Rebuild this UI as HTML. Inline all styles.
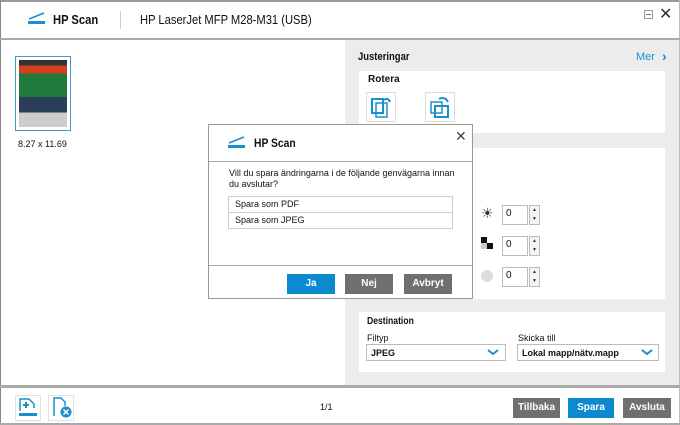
<!DOCTYPE html>
<html><head><meta charset="utf-8"><style>
*{box-sizing:border-box;margin:0;padding:0}
body{width:680px;height:425px;overflow:hidden;background:#fff;font-family:"Liberation Sans",sans-serif;position:relative;color:#111}
.a{position:absolute}
.b{font-weight:bold}
.n{transform:scaleX(0.86);transform-origin:left top;white-space:nowrap}
.btn{position:absolute;height:20px;color:#fff;font-weight:bold;font-size:10px;text-align:center;line-height:20px}
.g{background:#707070}.bl{background:#0c8ad0}
.sp{position:absolute;width:11px;height:20px;border:1px solid #bbb;background:#f4f4f4;font-size:5px;line-height:9px;text-align:center;color:#333}
.in{position:absolute;width:26px;height:20px;border:1px solid #bbb;background:#fff;font-size:10px;padding:2px 3px}
</style></head><body>
<div class="a" style="left:0;top:0;width:680px;height:2px;background:#999"></div>
<div class="a" style="left:0;top:0;width:1px;height:425px;background:#888"></div>
<div class="a" style="left:679px;top:0;width:1px;height:425px;background:#bbb"></div>
<svg class="a" style="left:27px;top:11px" width="20" height="14"><path d="M2 8 L17 2" stroke="#1a8fd0" stroke-width="1.5"/><rect x="1" y="10" width="17" height="3" fill="#1a8fd0"/></svg>
<div class="a b n" style="left:53px;top:12px;font-size:13px">HP Scan</div>
<div class="a" style="left:120px;top:11px;width:1px;height:18px;background:#ccc"></div>
<div class="a n" style="left:140px;top:12px;font-size:13px">HP LaserJet MFP M28-M31 (USB)</div>
<div class="a" style="left:644px;top:10px;width:9px;height:9px;border:1px solid #999"></div>
<div class="a" style="left:646px;top:14px;width:5px;height:1px;background:#777"></div>
<div class="a" style="left:659px;top:4px;font-size:16px;color:#333">✕</div>
<div class="a" style="left:0;top:38px;width:680px;height:2px;background:#aaa"></div>
<div class="a" style="left:15px;top:56px;width:56px;height:75px;border:1px solid #3c9ad0;padding:3px">
<div style="width:100%;height:100%;background:linear-gradient(#333 0 8%,#d2401f 8% 20%,#1f7a3e 20% 55%,#2a3e58 55% 78%,#ccc 78% 100%)"></div></div>
<div class="a" style="left:18px;top:139px;font-size:9px">8.27 x 11.69</div>
<div class="a" style="left:345px;top:40px;width:334px;height:346px;background:#ececec"></div>
<div class="a b n" style="left:358px;top:51px;font-size:11px">Justeringar</div>
<div class="a" style="left:636px;top:51px;font-size:11px;color:#1a8fd0">Mer</div>
<div class="a b" style="left:662px;top:48px;font-size:14px;color:#1a8fd0">›</div>
<div class="a" style="left:359px;top:71px;width:306px;height:62px;background:#fff"></div>
<div class="a b" style="left:368px;top:74px;font-size:10px">Rotera</div>
<div class="a" style="left:366px;top:92px;width:30px;height:30px;border:1px solid #ddd"></div>
<div class="a" style="left:425px;top:92px;width:30px;height:30px;border:1px solid #ddd"></div>
<svg class="a" style="left:370px;top:94px" width="24" height="26"><rect x="2" y="5" width="11" height="14" fill="none" stroke="#1a8fd0" stroke-width="2"/><rect x="6" y="9" width="11" height="14" fill="none" stroke="#1a8fd0" stroke-width="1.5"/><path d="M14 6 Q18 3 20 8" fill="none" stroke="#1a8fd0" stroke-width="2"/></svg>
<svg class="a" style="left:429px;top:94px" width="24" height="26"><rect x="2" y="8" width="11" height="11" fill="none" stroke="#1a8fd0" stroke-width="1.5"/><rect x="6" y="12" width="13" height="11" fill="none" stroke="#1a8fd0" stroke-width="2"/><path d="M10 5 Q16 2 19 8" fill="none" stroke="#1a8fd0" stroke-width="2"/></svg>
<div class="a" style="left:359px;top:148px;width:306px;height:151px;background:#fff"></div>
<div class="a" style="left:481px;top:205px;font-size:14px;color:#333">☀</div>
<div class="a" style="left:481px;top:237px;width:6px;height:6px;background:#111"></div><div class="a" style="left:487px;top:243px;width:6px;height:6px;background:#111"></div><div class="a" style="left:481px;top:243px;width:6px;height:6px;background:#ccc"></div>
<div class="a" style="left:481px;top:270px;width:12px;height:12px;border-radius:50%;background:#ddd"></div>
<div class="in" style="left:502px;top:205px">0</div><div class="sp" style="left:529px;top:205px">▲<br>▼</div>
<div class="in" style="left:502px;top:236px">0</div><div class="sp" style="left:529px;top:236px">▲<br>▼</div>
<div class="in" style="left:502px;top:267px">0</div><div class="sp" style="left:529px;top:267px">▲<br>▼</div>
<div class="a" style="left:359px;top:312px;width:306px;height:60px;background:#fff"></div>
<div class="a b n" style="left:367px;top:316px;font-size:10px">Destination</div>
<div class="a" style="left:367px;top:333px;font-size:9px">Filtyp</div>
<div class="a" style="left:518px;top:333px;font-size:9px">Skicka till</div>
<div class="a b" style="left:366px;top:344px;width:140px;height:17px;border:1px solid #bbb;font-size:9px;padding:3px 4px">JPEG</div>
<div class="a b" style="left:517px;top:344px;width:142px;height:17px;border:1px solid #bbb;font-size:9px;padding:3px 4px">Lokal mapp/nätv.mapp</div>
<svg class="a" style="left:486px;top:348px" width="14" height="9"><path d="M2 2 L7 6 L12 2" fill="none" stroke="#1a8fd0" stroke-width="2"/></svg>
<svg class="a" style="left:640px;top:348px" width="14" height="9"><path d="M2 2 L7 6 L12 2" fill="none" stroke="#1a8fd0" stroke-width="2"/></svg>
<div class="a" style="left:0;top:385px;width:680px;height:3px;background:#aaa"></div>
<div class="a" style="left:0;top:423px;width:680px;height:2px;background:#aaa"></div>
<div class="a" style="left:15px;top:395px;width:26px;height:26px;border:1px solid #e0e0e0"></div>
<div class="a" style="left:48px;top:395px;width:26px;height:26px;border:1px solid #e0e0e0"></div>
<svg class="a" style="left:17px;top:396px" width="22" height="24"><path d="M3 15 V3 H12 L17 8 V12" fill="none" stroke="#1a8fd0" stroke-width="1.5"/><path d="M6 9 H12 M9 6 V12" stroke="#1a8fd0" stroke-width="2"/><rect x="2" y="17" width="18" height="3" fill="#1a8fd0"/></svg>
<svg class="a" style="left:51px;top:396px" width="22" height="24"><path d="M3 20 V2 H10 L14 6 V10" fill="none" stroke="#1a8fd0" stroke-width="1.5"/><circle cx="15" cy="16" r="5.5" fill="#1a8fd0"/><path d="M12.5 13.5 L17.5 18.5 M17.5 13.5 L12.5 18.5" stroke="#fff" stroke-width="1.5"/></svg>
<div class="a" style="left:320px;top:402px;font-size:9px">1/1</div>
<div class="btn g" style="left:513px;top:398px;width:47px">Tillbaka</div>
<div class="btn bl" style="left:568px;top:398px;width:46px">Spara</div>
<div class="btn g" style="left:623px;top:398px;width:48px">Avsluta</div>
<div class="a" style="left:208px;top:124px;width:265px;height:175px;background:#fff;border:1px solid #999"></div>
<svg class="a" style="left:227px;top:135px" width="20" height="14"><path d="M2 8 L17 2" stroke="#1a8fd0" stroke-width="1.5"/><rect x="1" y="10" width="17" height="3" fill="#1a8fd0"/></svg>
<div class="a b n" style="left:254px;top:136px;font-size:12px">HP Scan</div>
<div class="a" style="left:455px;top:128px;font-size:14px;color:#444">✕</div>
<div class="a" style="left:209px;top:161px;width:263px;height:1px;background:#aaa"></div>
<div class="a" style="left:229px;top:168px;font-size:9px;line-height:11px;width:230px">Vill du spara ändringarna i de följande genvägarna innan du avslutar?</div>
<div class="a" style="left:228px;top:196px;width:225px;height:33px;border:1px solid #ccc"></div>
<div class="a" style="left:228px;top:212px;width:225px;height:1px;background:#ccc"></div>
<div class="a" style="left:235px;top:199px;font-size:9px">Spara som PDF</div>
<div class="a" style="left:235px;top:215px;font-size:9px">Spara som JPEG</div>
<div class="a" style="left:209px;top:265px;width:263px;height:1px;background:#aaa"></div>
<div class="btn bl" style="left:287px;top:274px;width:48px">Ja</div>
<div class="btn g" style="left:345px;top:274px;width:48px">Nej</div>
<div class="btn g" style="left:404px;top:274px;width:48px">Avbryt</div>
</body></html>
